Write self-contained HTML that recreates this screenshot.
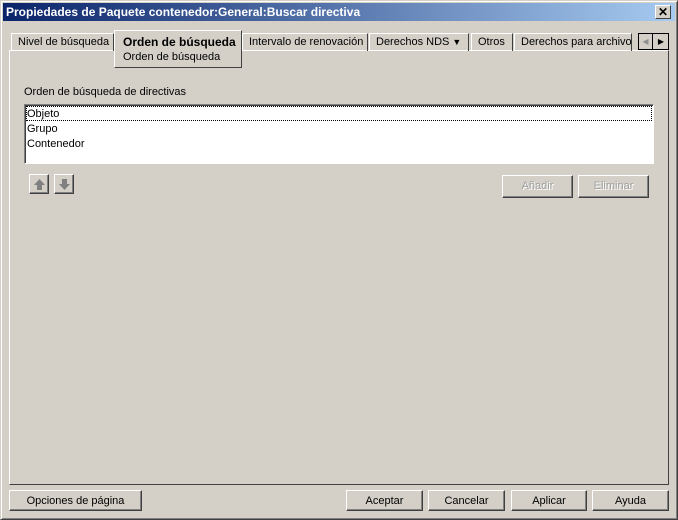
<!DOCTYPE html>
<html><head><style>
*{box-sizing:border-box}
body{margin:0;width:678px;height:520px;background:#d4d0c8;font-family:"Liberation Sans",sans-serif;font-size:11px;position:relative;overflow:hidden}
.a{position:absolute}
.win{left:0;top:0;width:678px;height:520px;border:1px solid;border-color:#d4d0c8 #404040 #404040 #d4d0c8;box-shadow:inset 1px 1px #fff,inset -1px -1px #808080}
.title{left:3px;top:3px;width:672px;height:18px;background:linear-gradient(90deg,#0a246a,#a6caf0);color:#fff;font-weight:bold;font-size:12px;line-height:18px;padding-left:3px}
.x{left:655px;top:5px;width:16px;height:14px;background:#d4d0c8;border:1px solid;border-color:#fff #404040 #404040 #fff;font-size:12px;font-weight:bold;color:#000;text-align:center;line-height:12px}
.tab{top:33px;height:18px;border:1px solid;border-color:#fff #404040 transparent #fff;border-bottom:none;line-height:17px;padding-left:6px;color:#000}
.panel{left:9px;top:50px;width:660px;height:435px;border:1px solid;border-color:#fff #404040 #404040 #fff}
.btn{border:1px solid;border-color:#fff #404040 #404040 #fff;box-shadow:inset -1px -1px #808080;text-align:center;line-height:21px;color:#000}
.dis{color:#a0a0a0;text-shadow:1px 1px #fff}
</style></head><body>
<div class="a win"></div>
<div class="a title">Propiedades de Paquete contenedor:General:Buscar directiva</div>
<div class="a x">✕</div>
<div class="a panel"></div>
<div class="a tab" style="left:11px;width:103px">Nivel de búsqueda</div>
<div class="a tab" style="left:242px;width:126px">Intervalo de renovación</div>
<div class="a tab" style="left:369px;width:100px">Derechos NDS <span style="font-size:9px">▼</span></div>
<div class="a tab" style="left:471px;width:42px">Otros</div>
<div class="a tab" style="left:514px;width:118px;overflow:hidden;white-space:nowrap">Derechos para archivo</div>
<div class="a" style="left:114px;top:30px;width:128px;height:38px;background:#d4d0c8;border:1px solid;border-color:#fff #404040 #404040 #fff;padding:4px 0 0 8px;line-height:14px"><b style="font-size:12px">Orden de búsqueda</b><br>Orden de búsqueda</div>
<div class="a" style="left:638px;top:33px;width:31px;height:17px;border:1px solid #000;background:#d4d0c8"><span class="a" style="left:0;top:0;width:14px;height:15px;border-right:1px solid #000;text-align:center;color:#909090;font-size:8px;line-height:15px">◀</span><span class="a" style="left:15px;top:0;width:14px;height:15px;text-align:center;font-size:8px;line-height:15px">▶</span></div>
<div class="a" style="left:24px;top:86px">Orden de búsqueda de directivas</div>
<div class="a" style="left:24px;top:104px;width:630px;height:60px;background:#fff;border:1px solid;border-color:#808080 #fff #fff #808080;box-shadow:inset 1px 1px #404040">
<div class="a" style="left:1px;top:1px;width:626px;height:15px;border:1px dotted #000;line-height:14px">Objeto</div>
<div class="a" style="left:2px;top:17px;line-height:15px">Grupo<br>Contenedor</div></div>
<div class="a btn" style="left:29px;top:174px;width:20px;height:20px"><svg class="a" style="left:2px;top:2px" width="15" height="15"><path d="M7.5 2L13 8H10V13H5V8H2Z" fill="#808080"/></svg></div>
<div class="a btn" style="left:54px;top:174px;width:20px;height:20px"><svg class="a" style="left:2px;top:2px" width="15" height="15"><path d="M7.5 13L13 7H10V2H5V7H2Z" fill="#808080"/></svg></div>
<div class="a btn dis" style="left:502px;top:175px;width:71px;height:23px">Añadir</div>
<div class="a btn dis" style="left:578px;top:175px;width:71px;height:23px">Eliminar</div>
<div class="a btn" style="left:9px;top:490px;width:133px;height:21px">Opciones de página</div>
<div class="a btn" style="left:346px;top:490px;width:77px;height:21px">Aceptar</div>
<div class="a btn" style="left:428px;top:490px;width:77px;height:21px">Cancelar</div>
<div class="a btn" style="left:511px;top:490px;width:76px;height:21px">Aplicar</div>
<div class="a btn" style="left:592px;top:490px;width:77px;height:21px">Ayuda</div>
</body></html>
